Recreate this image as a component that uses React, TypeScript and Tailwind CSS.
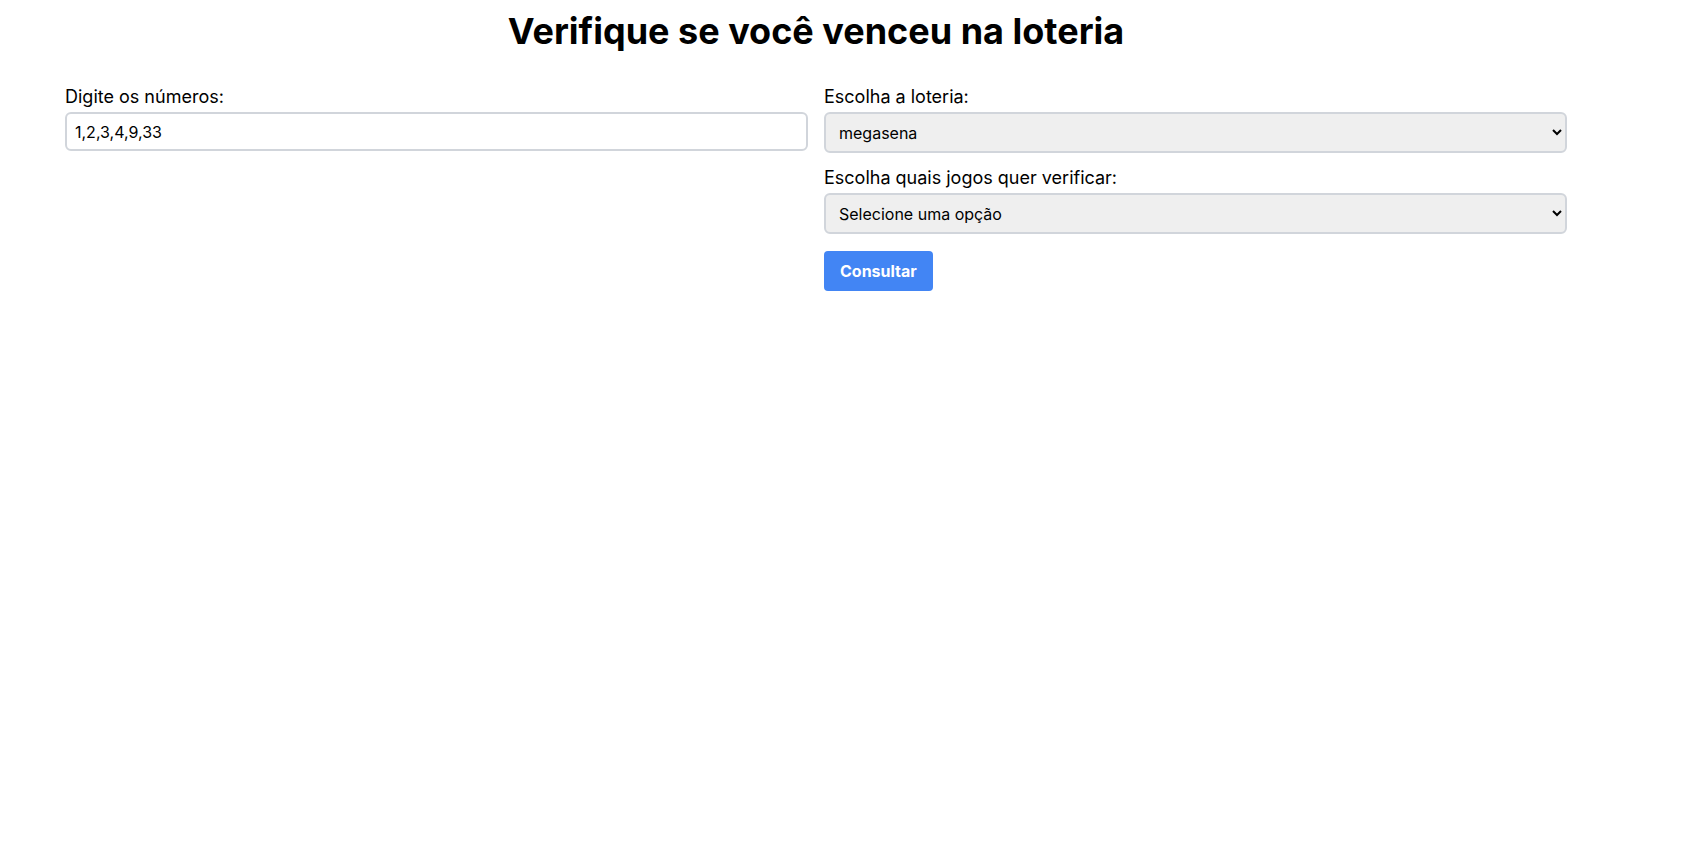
import React, { useState } from "react";

const App = () => {
  const [numbers, setNumbers] = useState("1,2,3,4,9,33");
  const [lottery, setLottery] = useState("megasena");
  const [games, setGames] = useState("");

  return (
    <div className="min-h-screen bg-white text-black font-['Inter','Noto_Sans',sans-serif]">
      <div className="ml-[65px] w-[1502px] pt-[11px]">
        <h1 className="text-4xl font-bold text-center mb-[34px]">
          Verifique se você venceu na loteria
        </h1>

        <div className="grid grid-cols-2 gap-4">
          {/* Numbers */}
          <div>
            <label className="block mb-[3px] text-lg leading-6">
              Digite os números:
            </label>
            <input
              type="text"
              value={numbers}
              onChange={(e) => setNumbers(e.target.value)}
              className="w-full h-[39px] px-2 border-2 border-[#d1d5db] rounded-md text-base outline-none"
            />
          </div>

          {/* Lottery options */}
          <div>
            <label className="block mb-[3px] text-lg leading-6">
              Escolha a loteria:
            </label>
            <select
              value={lottery}
              onChange={(e) => setLottery(e.target.value)}
              className="w-full h-[41px] px-[9px] bg-[#efefef] border-2 border-[#d1d5db] rounded-md text-base mb-[13px]"
            >
              <option value="megasena">megasena</option>
              <option value="lotofacil">lotofacil</option>
              <option value="quina">quina</option>
            </select>

            <label className="block mb-[3px] text-lg leading-6">
              Escolha quais jogos quer verificar:
            </label>
            <select
              value={games}
              onChange={(e) => setGames(e.target.value)}
              className="w-full h-[41px] px-[9px] bg-[#efefef] border-2 border-[#d1d5db] rounded-md text-base mb-[17px]"
            >
              <option value="">Selecione uma opção</option>
              <option value="ultimo">Último jogo</option>
              <option value="todos">Todos os jogos</option>
            </select>

            <button className="block h-10 px-4 bg-[#4285f4] text-white font-bold rounded">
              Consultar
            </button>
          </div>
        </div>
      </div>
    </div>
  );
};

export default App;
